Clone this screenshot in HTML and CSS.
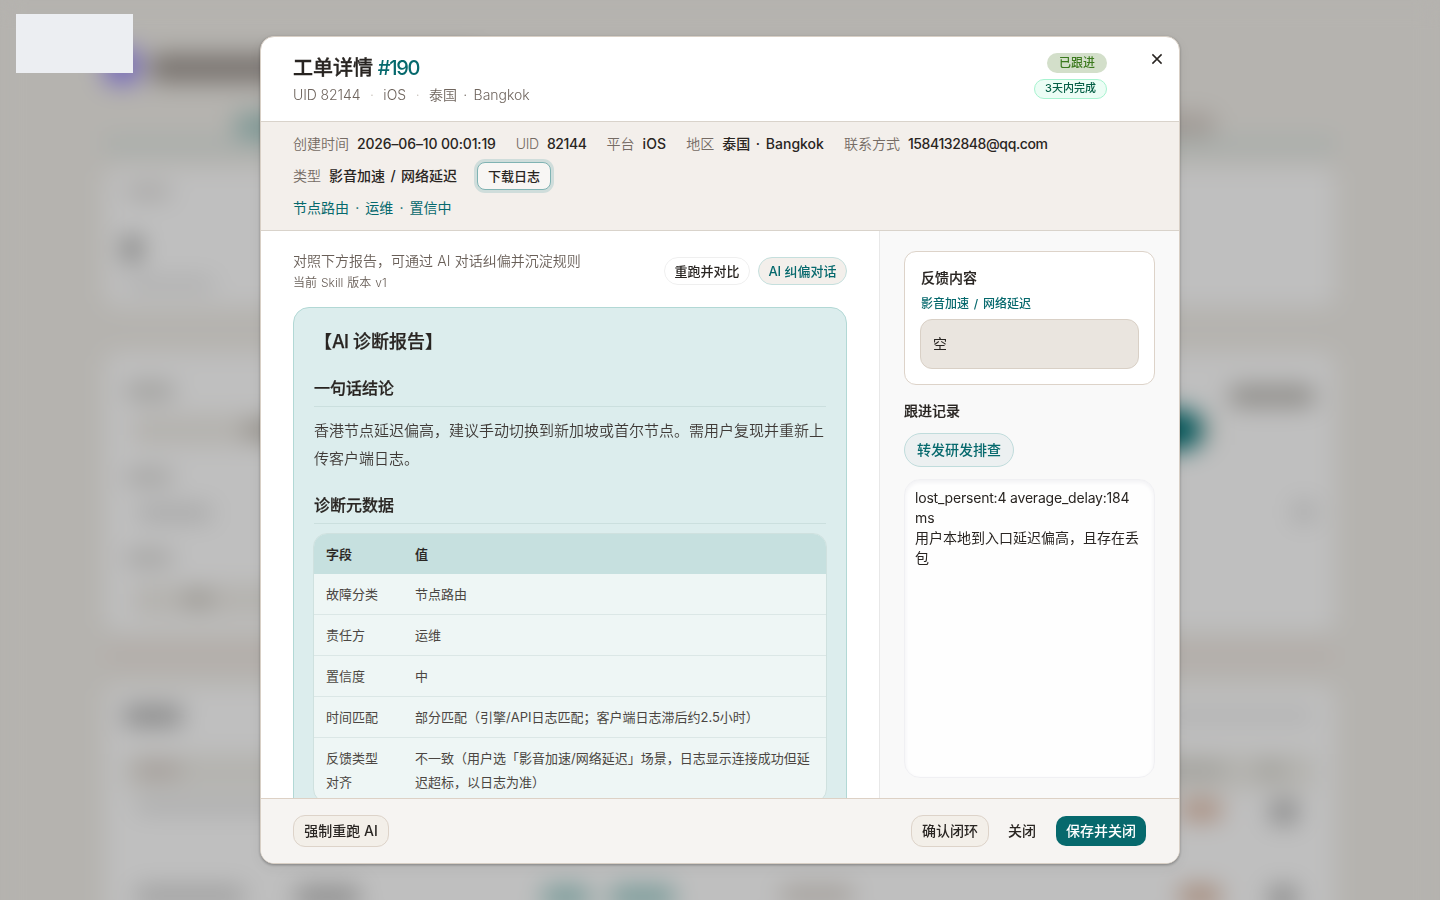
FILE: index.html
```html
<!DOCTYPE html>
<html lang="zh-CN">
<head>
<meta charset="utf-8">
<title>工单详情 #190</title>
<link rel="stylesheet" href="styles.css">
</head>
<body>
<div class="page" aria-hidden="true">
  <div class="brand"><i class="logo"></i><i class="brand-name"></i></div>
  <div class="tabs"><i class="tab-on"></i><i class="tab-off"></i></div>
  <div class="panel panel-a"><i class="a1"></i><i class="a2"></i><i class="a3"></i></div>
  <div class="panel panel-b">
    <div class="split"><i class="b1"></i><i class="b2"></i></div>
    <div class="split field"><i class="b3"></i><i class="b4"></i></div>
    <i class="b5"></i>
    <div class="split"><i class="b6"></i><i class="b7"></i></div>
    <i class="b5"></i>
    <div class="field low"><i class="b8"></i></div>
  </div>
  <i class="band"></i>
  <div class="panel panel-c">
    <div class="split"><i class="c1"></i><i class="c2"></i></div>
    <div class="trow thead"><i class="c3"></i><i class="c4"></i><i class="c5"></i></div>
    <div class="trow"><i class="c6"></i><i class="red"></i><i class="gray"></i></div>
    <div class="trow last"><i class="c7"></i><i class="c8"></i><i class="teal"></i><i class="teal wide"></i><i class="c9"></i><i class="red"></i><i class="gray"></i></div>
  </div>
</div>
<div class="overlay">
  <section class="modal">
    <header class="head">
      <div>
        <h1>工单详情 <span class="num">#190</span></h1>
        <p class="sub"><span class="uid">UID 82144</span><i>·</i><span>iOS</span><i>·</i><span class="place">泰国 · Bangkok</span></p>
      </div>
      <div class="badges"><span class="badge done">已跟进</span><span class="badge due">3天内完成</span></div>
      <button class="close" aria-label="关闭"><svg width="12" height="12" viewBox="0 0 12 12"><path d="M1.400 1.400l9.200 9.200M10.600 1.400l-9.200 9.200" fill="none" stroke="currentColor" stroke-width="1.5"/></svg></button>
    </header>
    <div class="meta">
      <div class="row">
        <span><em>创建时间</em><b class="date">2026–06–10 00:01:19</b></span>
        <span><em class="ul">UID</em><b class="id">82144</b></span>
        <span><em>平台</em><b class="os">iOS</b></span>
        <span><em>地区</em><b class="city">泰国 · Bangkok</b></span>
        <span><em>联系方式</em><b class="mail">1584132848@qq.com</b></span>
      </div>
      <div class="row tall">
        <span><em>类型</em><b class="type">影音加速 / 网络延迟</b></span>
        <button class="log">下载日志</button>
      </div>
      <div class="row route">节点路由 · 运维 · 置信中</div>
    </div>
    <div class="body">
      <main>
        <div class="tools">
          <div><p class="hint">对照下方报告，可通过 AI 对话纠偏并沉淀规则</p><p class="ver">当前 Skill 版本 v1</p></div>
          <div class="btns"><button class="pill">重跑并对比</button><button class="pill ai">AI 纠偏对话</button></div>
        </div>
        <article class="report">
          <h2>【<span class="tight">AI</span> 诊断报告】</h2>
          <h3>一句话结论</h3>
          <p>香港节点延迟偏高，建议手动切换到新加坡或首尔节点。需用户复现并重新上传客户端日志。</p>
          <h3>诊断元数据</h3>
          <div class="table">
            <div class="tr th"><span>字段</span><span>值</span></div>
            <div class="tr"><span>故障分类</span><span>节点路由</span></div>
            <div class="tr"><span>责任方</span><span>运维</span></div>
            <div class="tr"><span>置信度</span><span>中</span></div>
            <div class="tr"><span>时间匹配</span><span>部分匹配（引擎/API日志匹配；客户端日志滞后约2.5小时）</span></div>
            <div class="tr"><span>反馈类型对齐</span><span>不一致（用户选「影音加速/网络延迟」场景，日志显示连接成功但延迟超标，以日志为准）</span></div>
          </div>
        </article>
      </main>
      <aside>
        <div class="card"><h4>反馈内容</h4><p class="kind">影音加速 / 网络延迟</p><div class="empty">空</div></div>
        <h4 class="follow">跟进记录</h4>
        <button class="forward">转发研发排查</button>
        <div class="note"><span class="lat">lost_persent:4 average_delay:184</span><br>ms<br>用户本地到入口延迟偏高，且存在丢包</div>
      </aside>
    </div>
    <footer>
      <button class="fbtn">强制重跑 AI</button>
      <button class="fbtn push">确认闭环</button>
      <button class="fbtn plain">关闭</button>
      <button class="fbtn save">保存并关闭</button>
    </footer>
  </section>
</div>
<div class="patch"></div>
</body>
</html>
```
FILE: styles.css
```css
* { box-sizing: border-box; margin: 0; padding: 0; }
body {
  width: 1440px; height: 900px; overflow: hidden; background: #b5b3af;
  font: 14px/20px Inter, "Noto Sans CJK SC", sans-serif; color: #292522;
}
button { font: inherit; color: inherit; border: 1px solid transparent; background: none; white-space: nowrap; }
i, em { font-style: normal; }

/* blurred page behind the dialog */
.page { height: 930px; overflow: hidden; padding: 48px 105px 0; filter: blur(12px); background: #b5b3af; }
.page i { display: block; flex: none; border-radius: 8px; }
.brand { display: flex; gap: 10px; height: 62px; }
.logo { width: 36px; height: 36px; margin-left: -1px; border-radius: 12px; background: #766aba; }
.brand-name { width: 330px; height: 28px; margin-top: 6px; background: #78726e; }
.tabs { display: flex; justify-content: space-between; height: 42px; padding: 4px 120px 0 130px; border-bottom: 14px solid #a6adaa; }
.page .tab-on { width: 120px; height: 24px; background: #7d9895; }
.page .tab-off { width: 90px; height: 22px; background: #a09994; }
.panel { background: #bfbfbf; border-radius: 12px; margin-top: 16px; padding: 20px; }
.panel-a { height: 138px; }
.a1 { width: 46px; height: 12px; margin-top: -2px; background: #a3a19f; }
.page .a2 { width: 18px; height: 26px; margin: 38px 0 0 -2px; background: #7a7a79; }
.a3 { width: 90px; height: 12px; margin: 16px 0 0; background: #acacac; }
.panel-b { height: 278px; margin-top: 47px; padding-top: 28px; }
.split { display: flex; justify-content: space-between; align-items: center; height: 28px; }
.b1 { width: 50px; height: 16px; margin-top: -8px; background: #9e9d9a; }
.b2 { width: 86px; height: 20px; margin-top: 2px; background: #8c8a86; }
.field { background: #b4b2ae; height: 30px; margin: 6px 100px 0 8px; padding-left: 110px; }
.b3 { width: 60px; height: 16px; background: #908c86; }
.page .b4 { width: 85px; height: 40px; margin-right: 13px; border-radius: 18px; background: #035659; }
.b5 { width: 48px; height: 14px; margin-top: 26px; background: #a09f9d; }
.b6 { width: 76px; height: 16px; margin: 30px 0 0 12px; background: #a7a7a7; }
.b7 { width: 22px; height: 22px; margin-top: 28px; background: #a8a8a8; }
.split + .b5 { margin-top: 25px; }
.b5 + .split + .b5 { margin-top: 39px; }
.low { margin-top: 20px; width: 300px; padding: 7px 0 0 50px; }
.b8 { width: 30px; height: 14px; background: #96938e; }
.page .band { height: 14px; margin-top: 17px; background: #b3aba7; }
.panel-c { height: 270px; margin-top: 24px; padding-top: 16px; }
.c1 { width: 60px; height: 20px; margin-left: -2px; background: #888; }
.c2 { width: 150px; height: 12px; background: #afafaf; }
.trow { display: flex; height: 38px; padding: 10px 10px 0; }
.thead { height: 36px; margin-top: 24px; padding-top: 9px; background: #b4b3af; }
.c3 { width: 46px; height: 14px; background: #a29a96; }
.c4 { width: 90px; height: 14px; margin-left: 954px; background: #9f9e99; }
.c5 { width: 26px; height: 14px; margin-left: 33px; background: #9c9b96; }
.c6 { width: 170px; height: 12px; background: #a8a8a8; }
.trow > .red { width: 42px; height: 20px; margin-left: 875px; background: #a88b7b; }
.trow > .gray { width: 28px; height: 24px; margin-left: 48px; background: #898989; }
.last { margin-top: 48px; }
.c7 { width: 110px; height: 20px; background: #a0a0a0; }
.c8 { width: 65px; height: 22px; margin-left: 50px; background: #8e8e8e; }
.trow > .teal { width: 48px; height: 22px; margin-left: 182px; background: #769a98; }
.trow > .wide { width: 65px; margin-left: 20px; }
.c9 { width: 74px; height: 18px; margin-left: 105px; background: #a39e99; }
.last > .red { margin-left: 325px; background: #a48776; }

/* dialog */
.overlay { position: fixed; inset: 0; display: flex; align-items: center; justify-content: center; }
.modal {
  width: 920px; height: 828px; display: flex; flex-direction: column; overflow: hidden;
  background: #fff; border: 1px solid #d8cfc5; border-radius: 14px; box-shadow: 0 1px 3px rgba(0,0,0,.3), 0 4px 14px rgba(0,0,0,.05);
}
.head { display: flex; height: 85px; padding: 16px 12px 0 32px; border-bottom: 1px solid #d9d3cb; }
h1 { padding-top: 1px; font-size: 20px; line-height: 28px; font-weight: 500; -webkit-text-stroke: .35px currentColor; }
.num { margin-left: -.5px; letter-spacing: -1.3px; color: #06696d; -webkit-text-stroke: 0; }
.sub { display: flex; margin-top: 3px; color: #6f655e; font-weight: 350; }
.sub i { width: 23px; text-align: center; color: #c8c1ba; }
.uid { letter-spacing: -.1px; }
.place { word-spacing: 2.3px; }
.badges { margin-left: auto; display: flex; flex-direction: column; align-items: flex-end; gap: 6px; }
.badge { height: 20px; border-radius: 10px; font-weight: 500; text-align: center; }
.done { width: 60px; font-size: 12px; background: #d3dfca; color: #3c7a1e; }
.due { width: 73px; font-size: 11px; line-height: 17px; background: #ecfdf5; border: 1px solid #a7f3d0; color: #065f46; }
.close { width: 20px; height: 20px; margin: -4px 0 0 40px; display: grid; place-items: center; }
.meta { height: 109px; padding: 12px 32px; display: flex; flex-direction: column; gap: 8px; background: #f3efeb; border-bottom: 1px solid #d9d3cb; }
.row { display: flex; gap: 20px; height: 20px; align-items: center; white-space: nowrap; }
.tall { height: 28px; }
.row span { display: flex; gap: 8px; }
.row em { color: #756b64; font-weight: 350; }
.row b { font-weight: 500; }
.date { letter-spacing: -.15px; }
.row .ul { letter-spacing: -.3px; }
.id { letter-spacing: -.4px; }
.os { letter-spacing: .1px; }
.city { word-spacing: 2px; }
.mail { letter-spacing: -.4px; }
.type { word-spacing: 1.7px; }
.log { width: 74px; height: 28px; border: 1px solid #80b3b3; border-radius: 8px; box-shadow: 0 0 0 3px #cfdddb; background: #f8f6f4; font-size: 13px; font-weight: 500; line-height: 26px; }
.route { color: #06696d; word-spacing: 2.2px; }
.body { display: flex; height: 567px; }
main { width: 619px; padding: 20px 32px 0; border-right: 1px solid #e8e8e8; overflow: hidden; }
.tools { display: flex; justify-content: space-between; height: 56px; }
.tools p { color: #695f58; font-weight: 350; }
.hint { white-space: nowrap; word-spacing: .4px; }
.tools .ver { font-size: 12px; line-height: 24px; word-spacing: .6px; }
.btns { display: flex; gap: 8px; padding-top: 6px; }
.pill { width: 86px; height: 28px; border: 1px solid #efefef; border-radius: 14px; font-size: 13px; font-weight: 500; line-height: 26px; }
.pill.ai { width: 89px; background: #f3efeb; border-color: #c5dfdd; color: #06696d; }
.report { height: 520px; padding: 20px 20px 0; border: 1px solid #b2d8d5; border-radius: 16px; background: #dceded; }
.report h2 { font-size: 18px; line-height: 28px; font-weight: 500; -webkit-text-stroke: .25px currentColor; }
.tight { letter-spacing: -.7px; }
.report h3 { height: 31px; margin-top: 20px; margin-bottom: 10px; font-size: 16px; line-height: 24px; font-weight: 500; border-bottom: 1px solid #cbdfde; -webkit-text-stroke: .25px currentColor; }
.report p { font-size: 15px; line-height: 28px; color: #3f3a37; font-weight: 350; }
.report p + h3 { margin-bottom: 9px; }
.table { margin: 0 -1px; border: 1px solid #cfe1df; border-radius: 14px; overflow: hidden; background: #eef6f5; font-size: 13px; line-height: 24px; color: #4b4642; }
.tr { display: grid; grid-template-columns: 89px 1fr; padding: 8px 12px; border-bottom: 1px solid #dbe7e6; }
.tr span:first-child { width: 52px; white-space: normal; }
.th { height: 40px; background: #c6e0df; border: 0; font-weight: 500; color: #292522; -webkit-text-stroke: .2px currentColor; }
.tr:last-child { border: 0; }
aside { flex: 1; padding: 20px 24px; background: #f9f9f9; }
.card { height: 134px; padding: 16px 15px; border: 1px solid #ddd3c9; border-radius: 12px; background: #fff; }
h4 { font-size: 14px; line-height: 20px; font-weight: 500; -webkit-text-stroke: .2px currentColor; }
.card h4, .kind { margin-left: 1px; }
.kind { margin-top: 6px; font-size: 12px; line-height: 20px; font-weight: 500; color: #06696d; word-spacing: 1.6px; }
.empty { height: 50px; margin-top: 5px; padding: 14px 12px; border: 1px solid #d9d0c6; border-radius: 12px; background: #eae5df; }
.follow { margin: 16px 0 12px; }
.forward { display: block; width: 110px; height: 34px; border: 1px solid #c0dcdc; border-radius: 17px; background: #ecf0f1; color: #06696d; font-weight: 500; }
.note { height: 299px; margin-top: 12px; padding: 8px 10px; border: 1px solid #f0f0f3; border-radius: 16px; background: #fefefe; box-shadow: inset 0 2px 4px #f0f0f3; }
.lat { white-space: nowrap; letter-spacing: -.2px; }
footer { height: 65px; display: flex; align-items: center; padding: 0 33px 0 32px; border-top: 1px solid #ddd1c5; background: #f6f4f2; }
.fbtn { width: 96px; height: 32px; border: 1px solid #ddd3c9; border-radius: 12px; background: #f3efe9; font-weight: 500; line-height: 30px; }
.push { width: 78px; margin-left: auto; }
.plain { width: 46px; margin: 0 11px 0 10px; background: none; border: 0; }
.save { width: 90px; height: 30px; line-height: 30px; border: 0; border-radius: 10px; background: #06696d; color: #fff; }
.patch { position: fixed; left: 16px; top: 14px; width: 117px; height: 59px; background: #eceef2; }
```
